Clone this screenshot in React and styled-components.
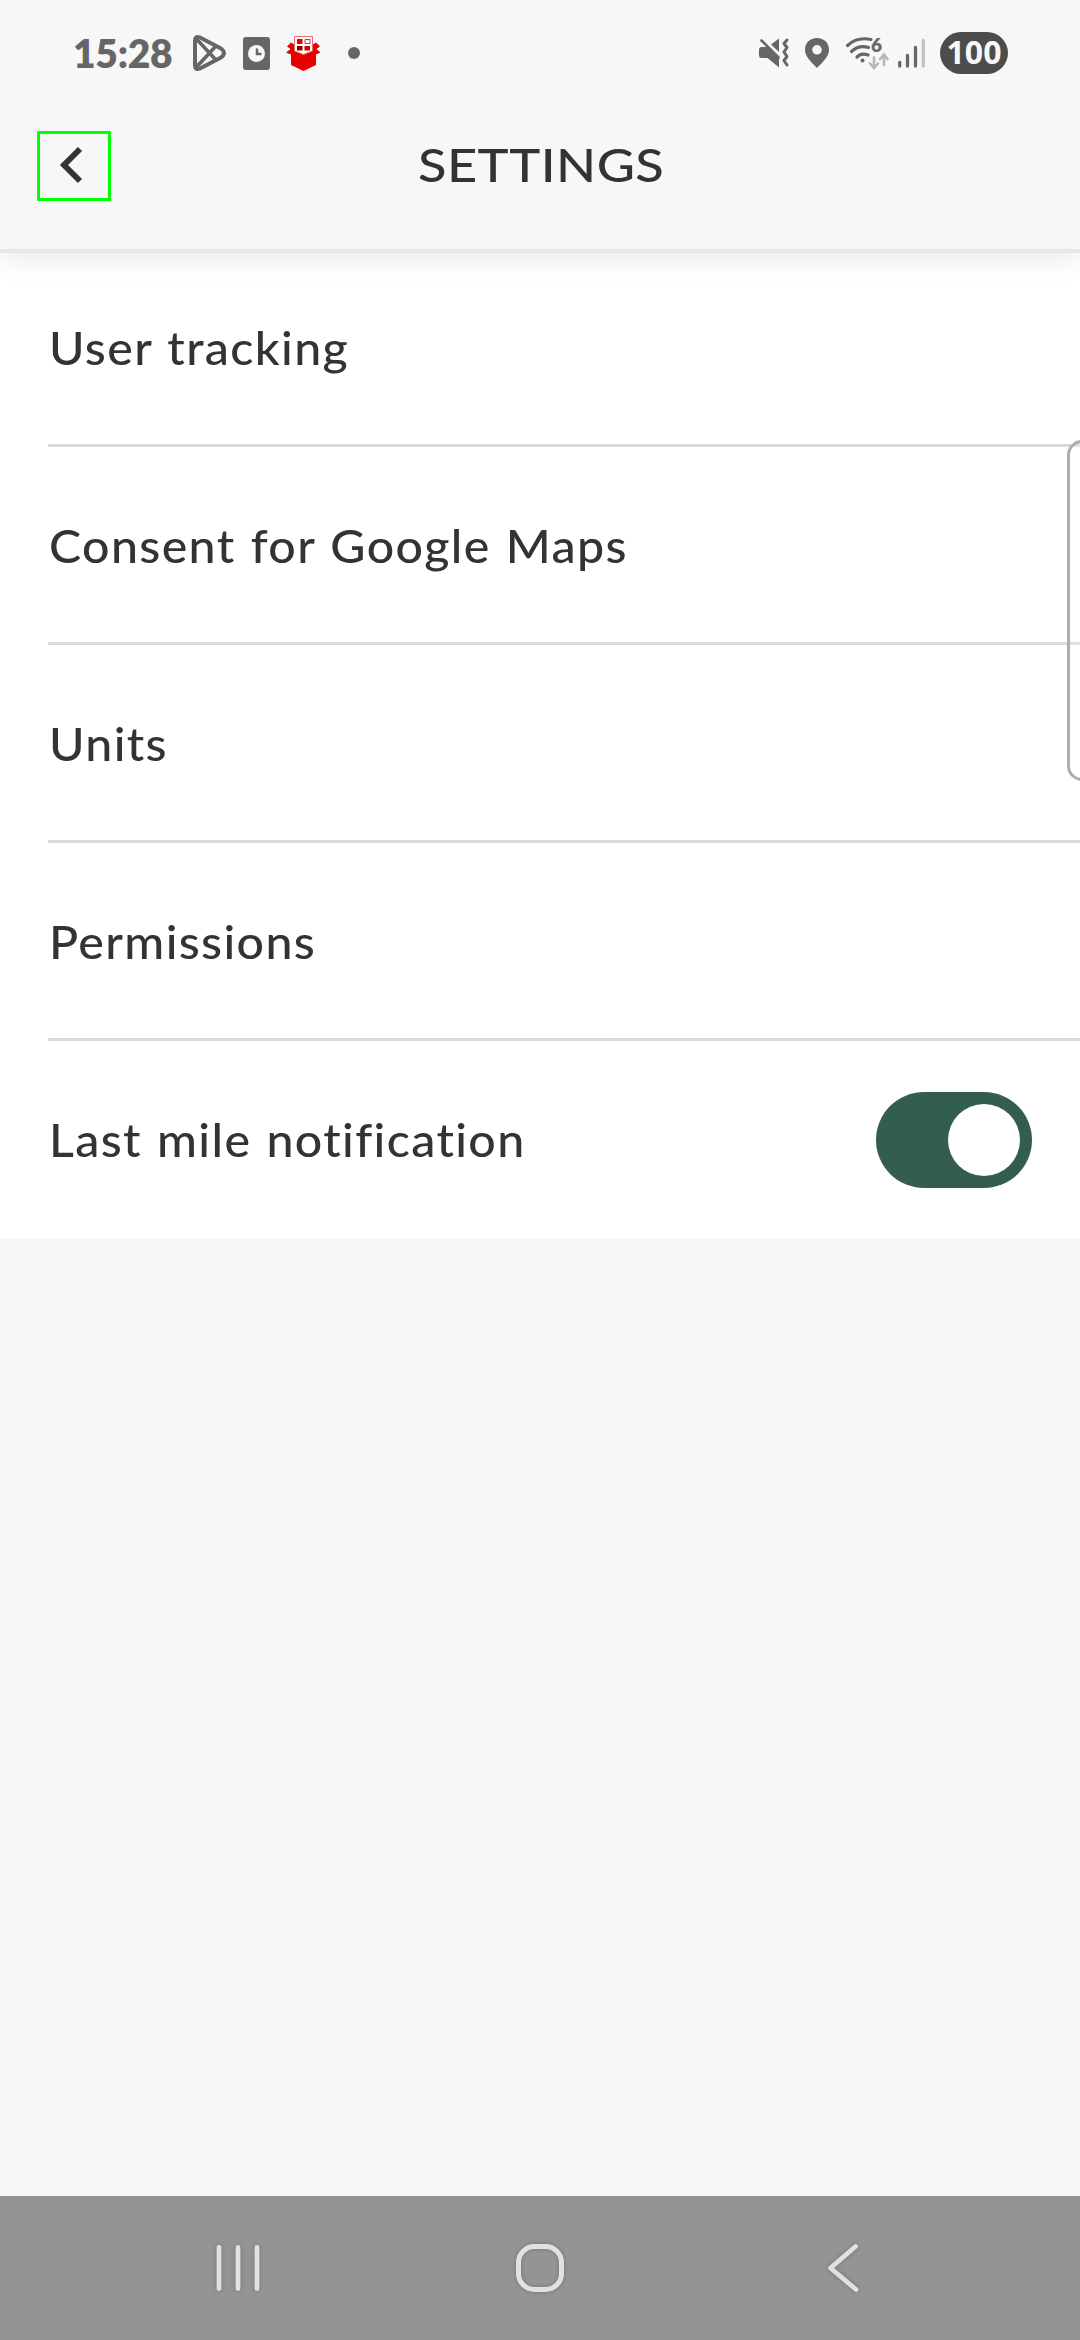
import React from "react";
import styled, { createGlobalStyle } from "styled-components";

const GlobalStyle = createGlobalStyle`
  * { box-sizing: border-box; }
  body { margin: 0; background: #f7f7f7; }
`;

const Screen = styled.div`
  position: relative;
  display: flex;
  flex-direction: column;
  width: 1080px;
  height: 2340px;
  overflow: hidden;
  background: #f7f7f7;
  color: #333333;
  font-family: Lato, "Noto Sans", sans-serif;
`;

const Header = styled.header`
  position: relative;
  z-index: 1;
  height: 249px;
  background: #f7f7f7;
  box-shadow: 0 4px 0 #e7e7e7, 0 8px 30px rgba(0, 0, 0, 0.1);
`;

const StatusBar = styled.div`
  display: flex;
  justify-content: space-between;
  align-items: center;
  height: 106px;
  padding: 0 72px 0 73px;
`;

const StatusGroup = styled.div`
  display: flex;
  align-items: center;
`;

const Clock = styled.span`
  width: 103px;
  color: #666666;
  font-size: 39px;
  font-weight: 800;
  line-height: 46px;
  letter-spacing: -0.3px;
  white-space: nowrap;
`;

const Icon = styled.svg`
  display: block;
  flex: none;
  overflow: visible;
  margin-left: ${(p) => p.$before || 0}px;
`;

const Dot = styled.span`
  width: 12px;
  height: 12px;
  margin-left: 27px;
  border-radius: 50%;
  background: #666666;
`;

const Battery = styled.span`
  display: flex;
  align-items: center;
  justify-content: center;
  width: 68px;
  height: 42px;
  margin-left: 15px;
  border-radius: 21px;
  background: #4c4c4c;
  color: #f7f7f7;
  font-family: "Open Sans", sans-serif;
  font-size: 32px;
  font-weight: 700;
  line-height: 40px;
  padding-bottom: 2px;
`;

const TitleBar = styled.div`
  display: grid;
  grid-template-columns: 74px 1fr 74px;
  align-items: center;
  height: 120px;
  padding: 0 37px;
`;

const BackButton = styled.button`
  display: flex;
  align-items: center;
  height: 70px;
  padding: 0 0 2px 20px;
  border: 3px solid #00ff00;
  border-radius: 1px;
  background: transparent;
`;

const Title = styled.h1`
  margin: 0;
  padding: 0 0 2px 2px;
  font-size: 46px;
  font-weight: 500;
  line-height: 56px;
  letter-spacing: 0.4px;
  text-align: center;
  transform: scaleX(1.14);
`;

const List = styled.main`
  padding-left: 48px;
  background: #ffffff;
`;

const Row = styled.div`
  display: flex;
  align-items: center;
  justify-content: space-between;
  height: 198px;
  padding: 3px 48px 0 1px;
  border-bottom: 3px solid ${(p) => (p.$last ? "transparent" : "#d9d9d9")};
`;

const Label = styled.span`
  font-size: 46px;
  font-weight: 500;
  line-height: 56px;
  letter-spacing: 1.3px;
  word-spacing: 1.5px;
  white-space: nowrap;
  transform: scaleX(1.05);
  transform-origin: left center;
`;

const Toggle = styled.button`
  display: flex;
  justify-content: flex-end;
  width: 156px;
  height: 96px;
  padding: 12px;
  border: 0;
  border-radius: 48px;
  background: #335d4c;
`;

const Knob = styled.span`
  width: 72px;
  height: 72px;
  border-radius: 50%;
  background: #ffffff;
`;

const EdgeHandle = styled.div`
  position: absolute;
  top: 440px;
  right: -28px;
  z-index: 2;
  width: 41px;
  height: 341px;
  border: 3px solid #adadad;
  border-radius: 15px;
  background: rgba(255, 255, 255, 0.2);
`;

const NavBar = styled.nav`
  display: flex;
  align-items: center;
  justify-content: space-between;
  height: 144px;
  margin-top: auto;
  padding: 0 214px;
  background: #949494;
  svg { filter: drop-shadow(0 0 2px rgba(0, 0, 0, 0.22)); }
`;

const rows = [
  { label: "User tracking" },
  { label: "Consent for Google Maps" },
  { label: "Units" },
  { label: "Permissions" },
  { label: "Last mile notification", toggle: true },
];

const PlayIcon = () => (
  <Icon $before={17} width="33" height="36" viewBox="193 35 33 36" fill="none" stroke="#666" strokeWidth="4" strokeLinejoin="round">
    <path d="M195 40.500Q195 35.500 200 37.500L221 48.500Q227 53 221 57.500L200 68.500Q195 70.500 195 65.500Z" />
    <path d="M196 38.500L216 60M196 67.500L216 46" strokeWidth="3.500" />
  </Icon>
);

const CardClockIcon = () => (
  <Icon $before={17} width="27" height="33" viewBox="243 37 27 33">
    <rect x="243" y="37" width="27" height="33" rx="3" fill="#666" />
    <circle cx="256.500" cy="53.500" r="8.500" fill="#f7f7f7" />
    <path d="M257 48.500v5.500h4.500" fill="none" stroke="#666" strokeWidth="2.500" />
  </Icon>
);

const ParcelIcon = () => (
  <Icon $before={16} width="35" height="35" viewBox="286 36 35 35">
    <path d="M291 42.500l4 2.500h17l4-2.500 4 4-3.500 2.500 4 3.500-4.500 2v10.500L303.500 71 291 65V54.500l-5-2 4.500-3.500-3.500-2.500z" fill="#e60000" />
    <path d="M294.500 36.500h18v14.500l-9 3.500-9-3.500z" fill="#fff" stroke="#ee6a6a" strokeWidth="1" />
    <path d="M297 39h5.500v5H297z" fill="#e60000" />
    <path d="M305 39.500h5v4h-5z" fill="#fff" stroke="#b94040" strokeWidth="1" />
    <path d="M297 46h5.500v4.500H297z" fill="#8b0000" />
    <path d="M304.500 46h5.500v4.500h-5.500z" fill="#d40000" />
  </Icon>
);

const MuteVibrateIcon = () => (
  <Icon $before={0} width="29" height="30" viewBox="759 38 29 30">
    <path d="M779 38.500v13.500l-8-7.500z" fill="#666" />
    <path d="M761 47h7l11 11v9.500L767.500 58H761q-2-.5-2-2.500v-6q0-2 2-2.500z" fill="#666" />
    <path d="M761.500 40.500L778.500 57.500" stroke="#666" strokeWidth="2.600" strokeLinecap="round" />
    <path d="M787 40l-3 3.500 3 4-3 4.500 3 4.500-3 4 3 4.500" fill="none" stroke="#666" strokeWidth="3" strokeLinejoin="round" strokeLinecap="round" />
  </Icon>
);

const PinIcon = () => (
  <Icon $before={17} width="24" height="30" viewBox="805 38 24 30">
    <path fillRule="evenodd" d="M817 38c7 0 12 5 12 11.800 0 6.700-6.500 12.700-12 18.200-5.500-5.500-12-11.500-12-18.200C805 43 810 38 817 38zm0 7a4.800 4.800 0 1 0 0 9.600 4.800 4.800 0 0 0 0-9.600z" fill="#666" />
  </Icon>
);

const SixLabel = styled.text`
  font-family: Lato, sans-serif;
  font-size: 19px;
  font-weight: 800;
`;

const WifiIcon = () => (
  <Icon $before={17} width="42" height="32" viewBox="846 37 42 32" fill="none" strokeLinecap="round">
    <path d="M847.500 45.500Q857 36.500 871 39.500M851.500 51.500Q859 44.500 868.500 47.500M857 57Q861.500 52.500 868 55" stroke="#666" strokeWidth="3.200" />
    <circle cx="862.500" cy="60.500" r="2" fill="#666" />
    <SixLabel x="871" y="51.500" fill="#666">6</SixLabel>
    <path d="M874 57.500V68m-4-4.500l4 4.500 4-4.500M884 65V54.500m-4 4.500l4-4.500 3.500 4.500" stroke="#b7b7b7" strokeWidth="2.600" />
  </Icon>
);

const SignalIcon = () => (
  <Icon $before={10} width="27" height="29" viewBox="898 38 27 29" strokeWidth="3.300" strokeLinecap="round">
    <path d="M899.700 61.500V65M907.500 54.500V65M915.500 46.500V65" stroke="#666" />
    <path d="M923.300 39.500V65" stroke="#c2c2c2" />
  </Icon>
);

export default function App() {
  return (
    <Screen>
      <GlobalStyle />
      <Header>
        <StatusBar>
          <StatusGroup>
            <Clock>15:28</Clock>
            <PlayIcon />
            <CardClockIcon />
            <ParcelIcon />
            <Dot />
          </StatusGroup>
          <StatusGroup>
            <MuteVibrateIcon />
            <PinIcon />
            <WifiIcon />
            <SignalIcon />
            <Battery>100</Battery>
          </StatusGroup>
        </StatusBar>
        <TitleBar>
          <BackButton aria-label="Back">
            <Icon width="24" height="36" viewBox="0 0 24 36" fill="none" stroke="#333" strokeWidth="5.800">
              <path d="M20 2L4 18l16 16" />
            </Icon>
          </BackButton>
          <Title>SETTINGS</Title>
        </TitleBar>
      </Header>
      <List>
        {rows.map((row) => (
          <Row key={row.label} $last={row.toggle}>
            <Label>{row.label}</Label>
            {row.toggle && (
              <Toggle role="switch" aria-checked="true" aria-label={row.label}>
                <Knob />
              </Toggle>
            )}
          </Row>
        ))}
      </List>
      <EdgeHandle />
      <NavBar>
        <Icon width="48" height="48" viewBox="0 0 48 48" stroke="#e1e1e1" strokeWidth="4.800" strokeLinecap="round">
          <path d="M5 3.500v41M24 3.500v41M43 3.500v41" />
        </Icon>
        <Icon width="48" height="48" viewBox="0 0 48 48" fill="none" stroke="#e1e1e1" strokeWidth="5">
          <rect x="2.500" y="2.500" width="43" height="43" rx="16" />
        </Icon>
        <Icon width="48" height="48" viewBox="0 0 48 48" fill="none" stroke="#e1e1e1" strokeWidth="4.800" strokeLinecap="round" strokeLinejoin="round">
          <path d="M37.500 2.500L12.500 24 38 45.500" />
        </Icon>
      </NavBar>
    </Screen>
  );
}
